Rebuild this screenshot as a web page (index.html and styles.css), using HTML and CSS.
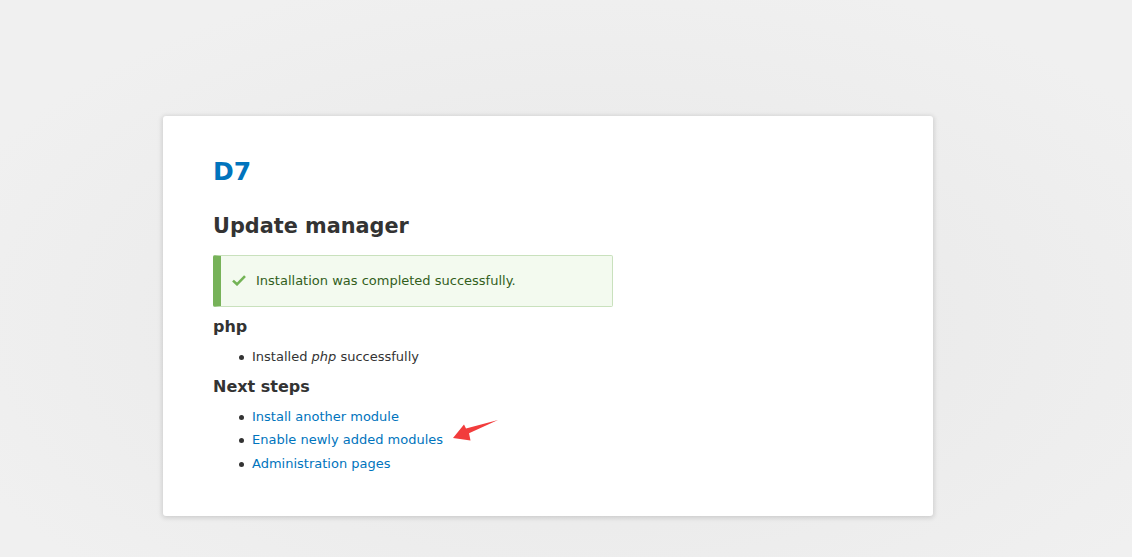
FILE: index.html
```html
<!DOCTYPE html>
<html lang="en">
<head>
<meta charset="utf-8">
<title>Update manager | D7</title>
<link rel="stylesheet" href="styles.css">
</head>
<body>
<div class="page">
  <div class="card">
    <div class="site-name"><a href="#">D7</a></div>
    <h1 class="page-title">Update manager</h1>
    <div class="message">
      <svg class="check" width="14" height="11" viewBox="0 0 14 11"><path d="M1 5.6 L5 9.3 L13 1.2" fill="none" stroke="#73b355" stroke-width="2.6" stroke-linejoin="miter"/></svg>
      <span>Installation was completed successfully.</span>
    </div>
    <h3 class="section">php</h3>
    <ul class="items">
      <li>Installed <em>php</em> successfully</li>
    </ul>
    <h3 class="section">Next steps</h3>
    <ul class="items last">
      <li><a href="#">Install another module</a></li>
      <li><a href="#">Enable newly added modules</a></li>
      <li><a href="#">Administration pages</a></li>
    </ul>
  </div>
</div>
<svg class="annot-arrow" width="50" height="24" viewBox="0 0 50 24"><polygon points="0,18 11,4.5 13,8.5 45,0 16,13.2 17.5,20.5" fill="#f23c3c"/></svg>
</body>
</html>
```
FILE: styles.css
```css
html, body {
  margin: 0;
  padding: 0;
  height: 100%;
}
body {
  font-family: "DejaVu Sans", sans-serif;
  color: #333;
  background: radial-gradient(ellipse 60% 65% at 52% 58%, #e8e8e8 0%, #ebebeb 45%, #f0f0f0 100%);
  position: relative;
  overflow: hidden;
}
.page {
  padding-top: 116px;
  padding-left: 163px;
}
.card {
  width: 770px;
  box-sizing: border-box;
  height: 400px;
  background: #fff;
  border-radius: 3px;
  box-shadow: 0 1px 5px 1px rgba(0, 0, 0, 0.14);
  padding: 41px 50px 0 50px;
}
.site-name {
  font-size: 25px;
  font-weight: bold;
  line-height: 30px;
}
.site-name a {
  color: #0074bd;
  text-decoration: none;
}
.page-title {
  margin: 25.5px 0 0;
  font-size: 20.8px;
  line-height: 26px;
  font-weight: bold;
  color: #333;
}
.message {
  margin-top: 16px;
  width: 400px;
  box-sizing: border-box;
  display: flex;
  align-items: center;
  gap: 10px;
  padding: 15px 10px 15px 11px;
  border: 1px solid #c9e1bd;
  border-left: 8px solid #77b259;
  border-radius: 2px;
  background: #f3faef;
  color: #325e1c;
  font-size: 13px;
  line-height: 20px;
}
.check {
  flex: none;
  display: block;
}
.section {
  margin: 10px 0 0;
  font-size: 16px;
  line-height: 20px;
  font-weight: bold;
  color: #333;
}
.items {
  margin: 10px 0 0;
  padding-left: 39px;
  list-style: none;
  font-size: 13px;
  line-height: 20px;
}
.items li::before {
  content: "";
  display: inline-block;
  width: 5px;
  height: 5px;
  border-radius: 50%;
  background: #333;
  margin-left: -13px;
  margin-right: 8px;
  vertical-align: middle;
}
.items li + li {
  margin-top: 3.5px;
}
.items a {
  color: #0074bd;
  text-decoration: none;
}
.items em {
  font-style: italic;
}
.annot-arrow {
  position: absolute;
  left: 453px;
  top: 420px;
}
```
